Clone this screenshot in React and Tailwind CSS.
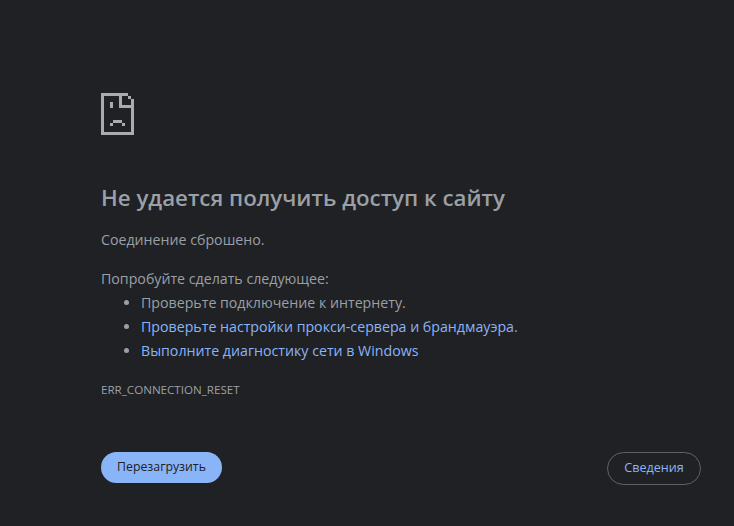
import React from 'react';

// Pixel-art "sad page" icon, drawn on a 3px grid
function SadPageIcon() {
  const pixels = [
    [0, 0, 9, 1], // top edge
    [0, 0, 1, 14], // left edge
    [0, 13, 11, 1], // bottom edge
    [10, 2, 1, 12], // right edge
    [9, 1, 1, 1], // fold corner
    [6, 0, 1, 5], // fold vertical
    [6, 4, 5, 1], // fold horizontal
    [3, 3, 1, 2], // eye
    [4, 9, 3, 1], // frown
    [3, 10, 1, 1],
    [7, 10, 1, 1],
  ];
  return (
    <svg width="33" height="42" viewBox="0 0 33 42" className="block" fill="#a9abad">
      {pixels.map(([x, y, w, h], i) => (
        <rect key={i} x={x * 3} y={y * 3} width={w * 3} height={h * 3} />
      ))}
    </svg>
  );
}

export default function App() {
  return (
    <div className="flex h-[526px] w-[734px] flex-col overflow-hidden bg-[#202124] pl-[101px] pr-[33px] pt-[93px] font-['Open_Sans','Noto_Sans',sans-serif] text-[#9aa0a6]">
      <SadPageIcon />

      <h1 className="mt-[48px] text-[22.3px] font-semibold leading-[30px] text-[#9aa0a6]">
        Не удается получить доступ к сайту
      </h1>
      <p className="mt-[17px] text-[14.2px] leading-[20px]">Соединение сброшено.</p>
      <p className="mt-[19px] text-[14.2px] leading-[20px]">Попробуйте сделать следующее:</p>

      <ul className="mt-[2px] list-disc pl-[40px] text-[14.2px] leading-[24px]">
        <li>Проверьте подключение к интернету.</li>
        <li>
          <a className="text-[#8ab4f8]">Проверьте настройки прокси-сервера и брандмауэра</a>.
        </li>
        <li>
          <a className="text-[#8ab4f8]">Выполните диагностику сети в Windows</a>
        </li>
      </ul>

      <div className="mt-[19px] text-[11.6px] leading-[16px]">ERR_CONNECTION_RESET</div>

      <div className="mt-[54px] flex items-start justify-between">
        <button className="flex h-[31px] w-[121px] items-center justify-center rounded-full bg-[#8ab4f8] text-[12.3px] text-[#202124]">
          Перезагрузить
        </button>
        <button className="flex h-[33px] w-[94px] items-center justify-center rounded-full border border-[#5f6368] text-[12.6px] text-[#8ab4f8]">
          Сведения
        </button>
      </div>
    </div>
  );
}
